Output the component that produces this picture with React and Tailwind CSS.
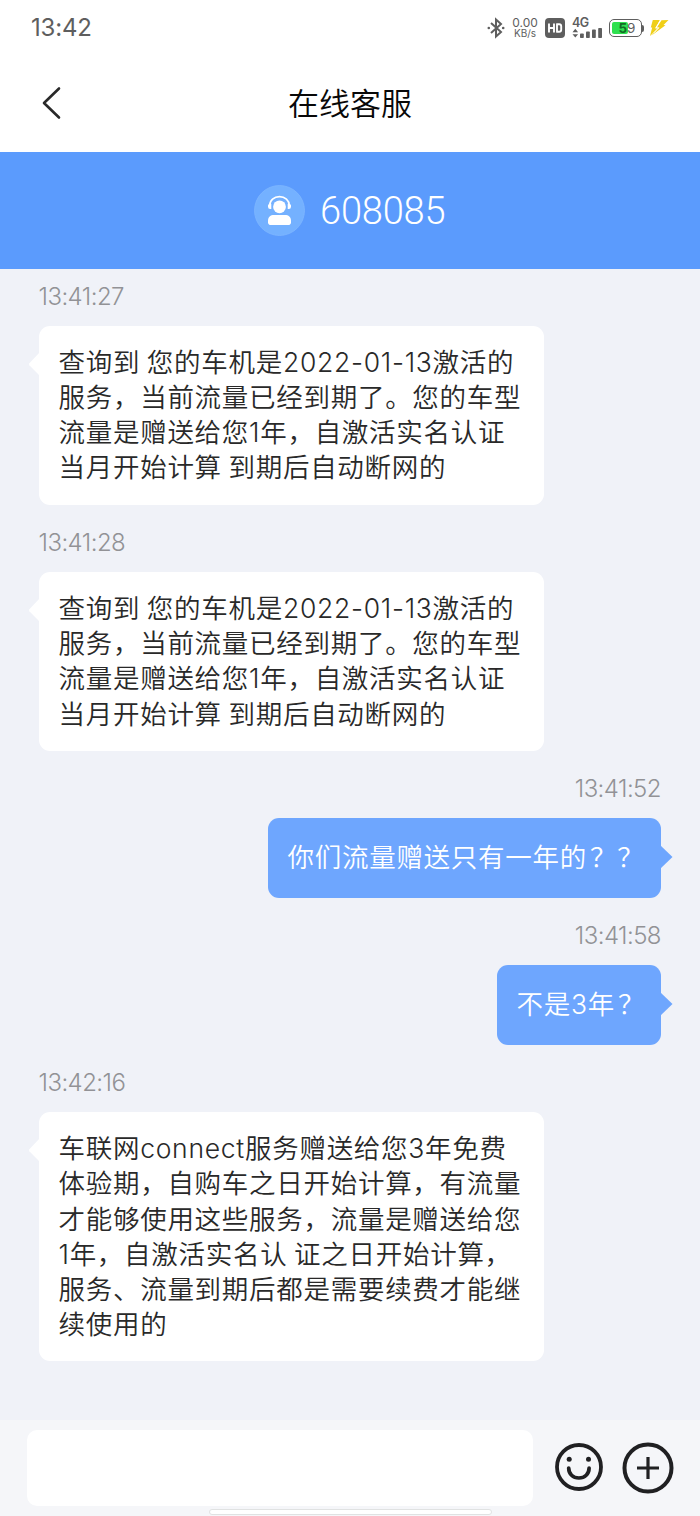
import React from "react";

function Tail({ mine }) {
  return mine ? (
    <svg className="absolute left-full top-[27px] -ml-px" width="13" height="25" viewBox="0 0 13 25">
      <path d="M0 0L12.5 12L0 24Z" fill="#6ea6fe" />
    </svg>
  ) : (
    <svg className="absolute right-full top-[26px] -mr-px" width="12" height="25" viewBox="0 0 12 25">
      <path d="M12 0L1.4 11.2Q0.6 12.2 1.4 13.2L12 24Z" fill="#ffffff" />
    </svg>
  );
}

function Message({ time, lines, mine, size }) {
  return (
    <div className={`flex flex-col ${mine ? "items-end" : "items-start"}`}>
      <time className={`pt-px font-['Inter',sans-serif] font-[350] text-[24px] leading-[30px] tracking-[-0.55px] text-[#929296] ${mine ? "" : "-ml-[0.5px]"}`}>
        {time}
      </time>
      <div
        className={`relative mt-[14px] flex flex-col justify-center rounded-[11px] pl-[19.5px] ${size} ${
          mine ? "bg-[#6ea6fe] text-white" : "bg-white text-[#292929]"
        }`}
      >
        <Tail mine={mine} />
        {lines.map((line, i) => (
          <p
            key={i}
            className="h-[35.1px] whitespace-pre font-['Inter','Noto_Sans_CJK_SC',sans-serif] text-[26.5px] font-[350] leading-[35.1px] tracking-[0.72px] [word-spacing:-1.5px]"
          >
            {line}
          </p>
        ))}
      </div>
    </div>
  );
}

function Question({ children }) {
  return <span className="ml-[3px]">{children}</span>;
}

const reply = [
  "查询到 您的车机是2022-01-13激活的",
  "服务，当前流量已经到期了。您的车型",
  "流量是赠送给您1年，自激活实名认证",
  "当月开始计算 到期后自动断网的",
];

const messages = [
  { time: "13:41:27", lines: reply, size: "w-[505px] h-[178.6px]" },
  { time: "13:41:28", lines: reply, size: "w-[505px] h-[178.6px]" },
  { time: "13:41:52", mine: true, lines: [<>你们流量赠送只有一年的<Question>？？</Question></>], size: "w-[393px] h-[79.3px]" },
  { time: "13:41:58", mine: true, lines: [<>不是3年<Question>？</Question></>], size: "w-[164px] h-[79.5px]" },
  {
    time: "13:42:16",
    size: "w-[505px] h-[248.5px]",
    lines: [
      "车联网connect服务赠送给您3年免费",
      "体验期，自购车之日开始计算，有流量",
      "才能够使用这些服务，流量是赠送给您",
      "1年，自激活实名认 证之日开始计算，",
      "服务、流量到期后都是需要续费才能继",
      "续使用的",
    ],
  },
];

function StatusBar() {
  return (
    <div className="flex h-[56px] items-center justify-between pl-[31px] pr-[31px] text-[#5e5e5e]">
      <span className="font-['Inter',sans-serif] text-[24px] leading-[30px] tracking-[-0.2px]">13:42</span>
      <div className="-mr-px flex items-center">
        <svg width="18" height="22" viewBox="0 0 18 22" fill="none" stroke="#5e5e5e" strokeWidth="2">
          <path d="M4 6L14 15L9 19.5V2.5L14 7L4 16" />
          <circle cx="1.8" cy="11" r="1.3" fill="#5e5e5e" stroke="none" />
          <circle cx="16.2" cy="11" r="1.3" fill="#5e5e5e" stroke="none" />
        </svg>
        <div className="ml-[7px] flex w-[26px] flex-col items-center font-['Inter',sans-serif]">
          <span className="text-[12px] leading-[11px]">0.00</span>
          <span className="text-[10px] leading-[11px]">KB/s</span>
        </div>
        <svg className="ml-[7px]" width="20" height="20" viewBox="0 0 20 20">
          <rect width="20" height="20" rx="4" fill="#5e5e5e" />
          <path d="M4 5.5V14.5M9 5.5V14.5M4 10H9M12 6.3V13.7M11.2 6.3H14.2Q16.2 6.3 16.2 8.3V11.7Q16.2 13.7 14.2 13.7H11.2" fill="none" stroke="#ffffff" strokeWidth="1.9" />
        </svg>
        <div className="ml-[7px] flex h-[22px] w-[31px] flex-col">
          <span className="h-[11px] font-['Inter',sans-serif] text-[12.5px] font-semibold leading-[11px] tracking-[-0.6px]">4G</span>
          <svg width="31" height="11" viewBox="0 0 31 11" fill="#5e5e5e">
            <path d="M0.5 4.2L3.3 0.8L6.1 4.2ZM0.5 6.2L3.3 9.6L6.1 6.2Z" />
            <rect x="8" y="5.5" width="3.8" height="4.6" rx="0.8" />
            <rect x="14" y="3.5" width="3.8" height="6.6" rx="0.8" />
            <rect x="20" y="1.5" width="3.8" height="8.6" rx="0.8" />
            <rect x="26.2" y="0" width="3.8" height="10.1" rx="0.8" />
          </svg>
        </div>
        <div className="ml-[6px] flex items-center">
          <div className="flex h-[18px] w-[33px] items-center rounded-[5px] border-[1.5px] border-[#5e5e5e] p-[2px]">
            <div className="flex h-[12px] w-[16px] items-center justify-end rounded-[2px] bg-[#2fe04f]">
              <span className="-mr-[7px] font-['Inter',sans-serif] text-[13.5px] leading-[12px] tracking-[-0.3px] text-[#5e5e5e]">
                <b className="font-bold text-[#116b25]">5</b>9
              </span>
            </div>
          </div>
          <span className="h-[7px] w-[2px] rounded-r-sm bg-[#5e5e5e]" />
        </div>
        <svg className="ml-[5px]" width="21" height="18" viewBox="0 0 21 18">
          <path d="M3.8 1H11L6.2 9.2L9.5 8.6L1 17L3.2 8.5H1.8Z" fill="#efcf18" />
          <path d="M12.5 1.2L19.5 1L14.5 6L16.5 6.2L2.5 16.5L9.6 8.9L7.8 8.6Z" fill="#f1cf17" />
          <path d="M11.8 0.5L6.8 9.2L9.9 8.7L5 13.8" fill="none" stroke="#ffffff" strokeWidth="0.9" />
        </svg>
      </div>
    </div>
  );
}

export default function App() {
  return (
    <div className="flex h-[1516px] w-[700px] flex-col overflow-hidden bg-[#f0f2f8]">
      <header className="h-[152px] bg-white">
        <StatusBar />
        <div className="grid h-[96px] grid-cols-[100px_1fr_100px] items-center">
          <svg className="ml-[41px] -mt-[2px]" width="21" height="34" viewBox="0 0 21 34" fill="none">
            <path d="M18 2.5L3 17L18 31.5" stroke="#292929" strokeWidth="2.6" strokeLinecap="round" strokeLinejoin="round" />
          </svg>
          <h1 className="-mt-[4px] text-center font-['Noto_Sans_CJK_SC',sans-serif] text-[31px] font-[350] leading-[92px] text-[#080808]">在线客服</h1>
        </div>
      </header>

      <div className="flex h-[117px] items-center bg-[#5b9bfd] pl-[254px]">
        <svg width="51" height="51" viewBox="0 0 51 51">
          <circle cx="25.5" cy="25.5" r="25" fill="#74b1ff" stroke="#83b9ff" strokeWidth="0.7" />
          <circle cx="25.5" cy="21.8" r="6.4" fill="#ffffff" />
          <path d="M15.7 21V20.5A9.8 8.9 0 0 1 35.3 20.5V21" fill="none" stroke="#ffffff" strokeWidth="1.7" />
          <path d="M14 20.5Q14 19 15.5 19H17.3V24H16.2Q14 24 14 21.8ZM37 20.5Q37 19 35.5 19H33.7V24H34.8Q37 24 37 21.8Z" fill="#ffffff" />
          <path d="M14 36C14 31.8 16.5 30 20 30H31C34.5 30 37 31.8 37 36V37.2Q37 40 34 40H17Q14 40 14 37.2Z" fill="#ffffff" />
        </svg>
        <span className="ml-[15px] font-['Roboto',sans-serif] text-[38px] font-[350] leading-[44px] tracking-[-0.2px] text-white">608085</span>
      </div>

      <main className="flex flex-1 flex-col gap-[22.6px] px-[39px] pt-[12px]">
        {messages.map((m) => (
          <Message key={m.time} {...m} />
        ))}
      </main>

      <footer className="flex h-[96px] flex-col bg-[#f5f6f9]">
        <div className="flex items-center pl-[27px] pt-[10px]">
          <div className="h-[76px] w-[506px] rounded-[10px] bg-white" />
          <svg className="-mt-[3px] ml-[22px]" width="48" height="48" viewBox="0 0 48 48" fill="none" stroke="#202022">
            <circle cx="24" cy="24" r="22" strokeWidth="3.8" />
            <circle cx="14.2" cy="16.3" r="2.5" fill="#202022" stroke="none" />
            <circle cx="33.5" cy="16.3" r="2.5" fill="#202022" stroke="none" />
            <path d="M13.7 25C13.7 31 18 35 23.9 35S34.1 31 34.1 25" strokeWidth="3.7" strokeLinecap="round" />
          </svg>
          <svg className="ml-[18.5px]" width="52" height="52" viewBox="0 0 52 52" fill="none" stroke="#202022">
            <circle cx="26" cy="26" r="23.5" strokeWidth="4" />
            <path d="M26 15V37M15 26H37" strokeWidth="3.2" />
          </svg>
        </div>
        <div className="mx-auto mt-[3px] h-[6px] w-[283px] rounded-full border-[1.5px] border-[#e0e2e2] bg-white" />
      </footer>
    </div>
  );
}
